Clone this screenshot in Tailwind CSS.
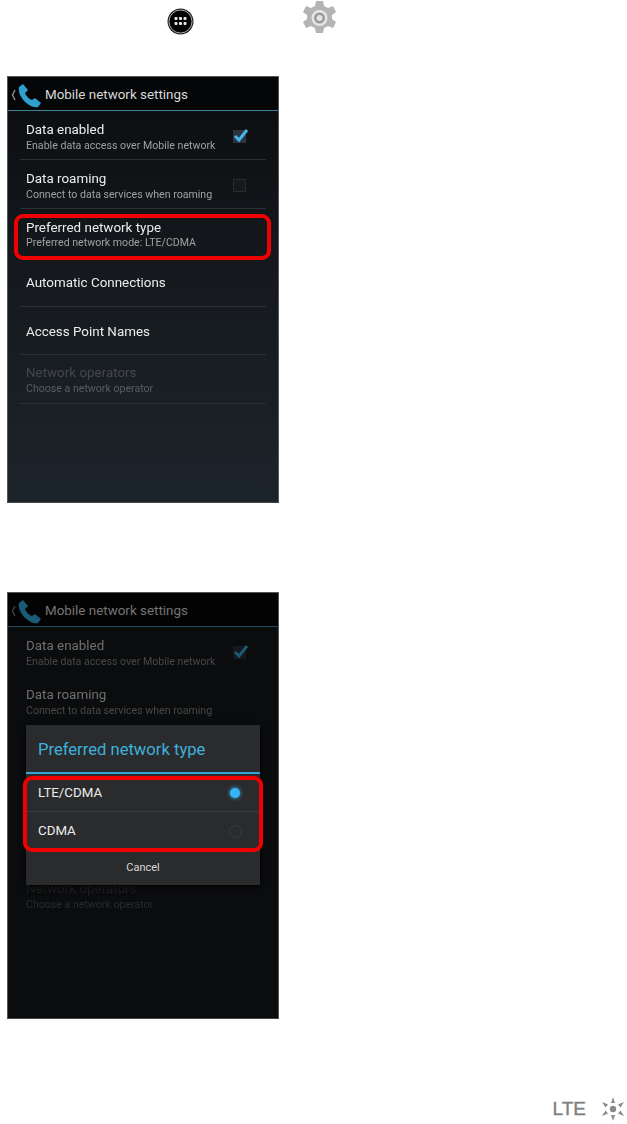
<!DOCTYPE html>
<html lang="en">
<head>
  <meta charset="UTF-8">
  <title>Mobile network settings</title>
  <script src="https://cdn.jsdelivr.net/npm/@tailwindcss/browser@4"></script>
</head>
<body class="bg-white">
  <div class="w-[627px] h-[1124px] overflow-hidden bg-white font-['Roboto',sans-serif]">
    <!-- Icons row -->
    <div class="h-[76px] flex items-start">
      <svg class="ml-[167px] mt-[8px] w-[27px] h-[27px]" viewBox="0 0 27 27">
        <circle cx="13.5" cy="13.5" r="13" fill="#222"/>
        <circle cx="13.5" cy="13.5" r="11.5" fill="#000" stroke="#aaa" stroke-width="1"/>
        <g fill="#e8e8e8">
          <rect x="7.5" y="9" width="3" height="3" rx="1"/><rect x="12" y="9" width="3" height="3" rx="1"/><rect x="16.5" y="9" width="3" height="3" rx="1"/>
          <rect x="7.5" y="14" width="3" height="3" rx="1"/><rect x="12" y="14" width="3" height="3" rx="1"/><rect x="16.5" y="14" width="3" height="3" rx="1"/>
        </g>
      </svg>
      <svg class="ml-[109px] mt-0 w-[33px] h-[36px]" viewBox="0 0 33 36">
        <path fill="#b4b4b4" d="M13 1h7l1 5 4 2 5-2 3 6-4 3v4l4 3-3 6-5-2-4 2-1 5h-7l-1-5-4-2-5 2-3-6 4-3v-4l-4-3 3-6 5 2 4-2z"/>
        <circle cx="16.5" cy="18" r="8" fill="#e6e6e6"/>
        <circle cx="16.500" cy="18" r="5.5" fill="#9a9a9a"/>
        <circle cx="16.5" cy="18" r="3" fill="#e4e4e4"/>
      </svg>
    </div>

    <!-- Screen 1 -->
    <div class="relative ml-[7px] w-[272px] h-[427px] border border-[#555] border-b-[#444] bg-gradient-to-b from-[#0b0d10] via-[#161a1e] to-[#1c242b] flex flex-col">
      <div class="h-[34px] bg-[#050607] border-b border-[#3f7f97] flex items-center shrink-0 pt-[3px]">
        <svg class="ml-[3px] w-[5px] h-[12px]" viewBox="0 0 5 12"><path d="M4 1 1.500 6 4 11" fill="none" stroke="#8a8a8a" stroke-width="1.500"/></svg>
        <svg class="ml-[1px] w-[25px] h-[25px]" viewBox="0 0 25 25">
          <path fill="#2f9fd0" d="M2 4 6 1l5 6-3 3c1 3 4 6 7 7l3-2 6 5-3 4c-2 1-7 0-13-5C3 14 1 8 2 4z"/>
        </svg>
        <span class="ml-[3px] text-[13.4px] text-[#d8d8d8]">Mobile network settings</span>
      </div>
      <div class="pl-[12px] pr-[12px] flex flex-col blur-[0.3px]">
        <div class="h-[49px] border-b border-[#2c3034] pl-[6px] pr-[16px] pt-[10px] flex justify-between">
          <div>
            <p class="text-[13.4px] leading-[18px] text-[#ececec]">Data enabled</p>
            <p class="text-[10.6px] leading-[13px] text-[#a0a0a0]">Enable data access over Mobile network</p>
          </div>
          <svg class="mt-[6px] w-[18px] h-[18px]" viewBox="0 0 18 18">
            <rect x="1" y="3" width="13" height="13" fill="#2b3440"/>
            <path d="M3 9l4 4 8-10" fill="none" stroke="#45b4e2" stroke-width="3"/>
          </svg>
        </div>
        <div class="h-[49px] border-b border-[#2c3034] pl-[6px] pr-[18px] pt-[10px] flex justify-between">
          <div>
            <p class="text-[13.4px] leading-[18px] text-[#ececec]">Data roaming</p>
            <p class="text-[10.6px] leading-[13px] text-[#a0a0a0]">Connect to data services when roaming</p>
          </div>
          <div class="mt-[9px] mr-[2px] w-[13px] h-[13px] border border-[#2a2c2e] bg-[#16191c]"></div>
        </div>
        <div class="h-[49px] border-b border-[#2c3034] pl-[6px] pt-[10px]">
          <p class="text-[13.4px] leading-[18px] text-[#ececec]">Preferred network type</p>
          <p class="text-[10.6px] leading-[12px] text-[#a0a0a0]">Preferred network mode: LTE/CDMA</p>
        </div>
        <div class="h-[49px] border-b border-[#2c3034] pl-[6px] pt-[2px] flex items-center">
          <p class="text-[13.4px] text-[#ececec]">Automatic Connections</p>
        </div>
        <div class="h-[48px] border-b border-[#2c3034] pl-[6px] pt-[3px] flex items-center">
          <p class="text-[13.4px] text-[#ececec]">Access Point Names</p>
        </div>
        <div class="h-[49px] border-b border-[#2c3034] pl-[6px] pt-[9px]">
          <p class="text-[13.4px] leading-[18px] text-[#45484b] blur-[0.6px]">Network operators</p>
          <p class="text-[10.6px] leading-[14px] text-[#5a5d60] blur-[0.4px]">Choose a network operator</p>
        </div>
      </div>
      <!-- Red highlight -->
      <div class="absolute left-[6px] top-[137px] w-[257px] h-[46px] border-[4px] border-[#f00000] rounded-[9px]"></div>
    </div>

    <!-- Screen 2 -->
    <div class="relative mt-[89px] ml-[7px] w-[272px] h-[427px] border border-[#555] border-b-[#444] bg-[#0b0c0e] flex flex-col">
      <div class="h-[34px] bg-[#030303] border-b border-[#1f4a5a] flex items-center shrink-0 pt-[3px]">
        <svg class="ml-[3px] w-[5px] h-[12px]" viewBox="0 0 5 12"><path d="M4 1 1.500 6 4 11" fill="none" stroke="#3c3c3c" stroke-width="1.500"/></svg>
        <svg class="ml-[1px] w-[25px] h-[25px]" viewBox="0 0 25 25">
          <path fill="#1b5a75" d="M2 4 6 1l5 6-3 3c1 3 4 6 7 7l3-2 6 5-3 4c-2 1-7 0-13-5C3 14 1 8 2 4z"/>
        </svg>
        <span class="ml-[3px] text-[13.4px] text-[#757575]">Mobile network settings</span>
      </div>
      <div class="pl-[18px] pr-[28px] flex flex-col blur-[0.3px]">
        <div class="h-[49px] pt-[10px] flex justify-between">
          <div>
            <p class="text-[13.4px] leading-[18px] text-[#707070]">Data enabled</p>
            <p class="text-[10.6px] leading-[13px] text-[#484848]">Enable data access over Mobile network</p>
          </div>
          <svg class="mt-[6px] w-[18px] h-[18px]" viewBox="0 0 18 18">
            <rect x="1" y="3" width="13" height="13" fill="#14191f"/>
            <path d="M3 9l4 4 8-10" fill="none" stroke="#1f5670" stroke-width="3"/>
          </svg>
        </div>
        <div class="h-[49px] pt-[10px]">
          <p class="text-[13.4px] leading-[18px] text-[#707070]">Data roaming</p>
          <p class="text-[10.6px] leading-[13px] text-[#484848]">Connect to data services when roaming</p>
        </div>
        <!-- rows behind the dialog -->
        <div class="h-[49px]"></div>
        <div class="h-[49px]"></div>
        <div class="h-[48px]"></div>
        <div class="h-[49px] pt-[9px] blur-[0.5px]">
          <p class="text-[13.4px] leading-[18px] text-[#1e1f20]">Network operators</p>
          <p class="text-[10.6px] leading-[14px] text-[#2a2b2c]">Choose a network operator</p>
        </div>
      </div>
      <!-- Dialog -->
      <div class="absolute left-[18px] top-[132px] w-[234px] h-[160px] bg-[#2a2b2c] flex flex-col shadow-[0_2px_6px_rgba(0,0,0,0.8)]">
        <div class="h-[49px] border-b-2 border-[#33a5d5] flex items-center pl-[12px] pt-[3px] shrink-0">
          <span class="text-[16.6px] text-[#3fb0dc]">Preferred network type</span>
        </div>
        <div class="h-[38px] border-b border-[#3a3b3c] flex items-center justify-between pl-[12px] pr-[20px] shrink-0">
          <span class="text-[13.300px] text-[#ececec]">LTE/CDMA</span>
          <span class="w-[10px] h-[10px] rounded-full bg-[#35b4f2] shadow-[0_0_4px_#35b4f2]"></span>
        </div>
        <div class="h-[38px] flex items-center justify-between pl-[12px] pr-[18px] shrink-0">
          <span class="text-[13.300px] text-[#ececec]">CDMA</span>
          <span class="w-[13px] h-[13px] rounded-full border border-[#3c3d3e]"></span>
        </div>
        <div class="flex-1 flex items-center justify-center border-t border-[#3a3b3c]">
          <span class="text-[11px] text-[#d8d8d8]">Cancel</span>
        </div>
      </div>
      <!-- Red highlight -->
      <div class="absolute left-[15px] top-[183px] w-[240px] h-[76px] border-[4px] border-[#f00000] rounded-[9px]"></div>
    </div>

    <!-- Footer mark -->
    <div class="mt-[77px] flex items-center justify-end pr-[1px]">
      <span class="text-[19px] leading-[20px] font-['Liberation_Sans',sans-serif] text-[#808080] [-webkit-text-stroke:0.4px_#808080]">LTE</span>
      <svg class="ml-[14px] w-[26px] h-[26px]" viewBox="0 0 26 26">
        <g fill="#8a8a8a">
          <circle cx="13" cy="13" r="3.2"/>
          <path d="M13 1l2 6h-4z"/><path d="M13 25l2-6h-4z"/>
          <path d="M2 6l6 2.500-2.500 3z"/><path d="M24 6l-6 2.500 2.500 3z"/>
          <path d="M2 20l6-2.500-2.500-3z"/><path d="M24 20l-6-2.500 2.500-3z"/>
        </g>
      </svg>
    </div>
  </div>
</body>
</html>
